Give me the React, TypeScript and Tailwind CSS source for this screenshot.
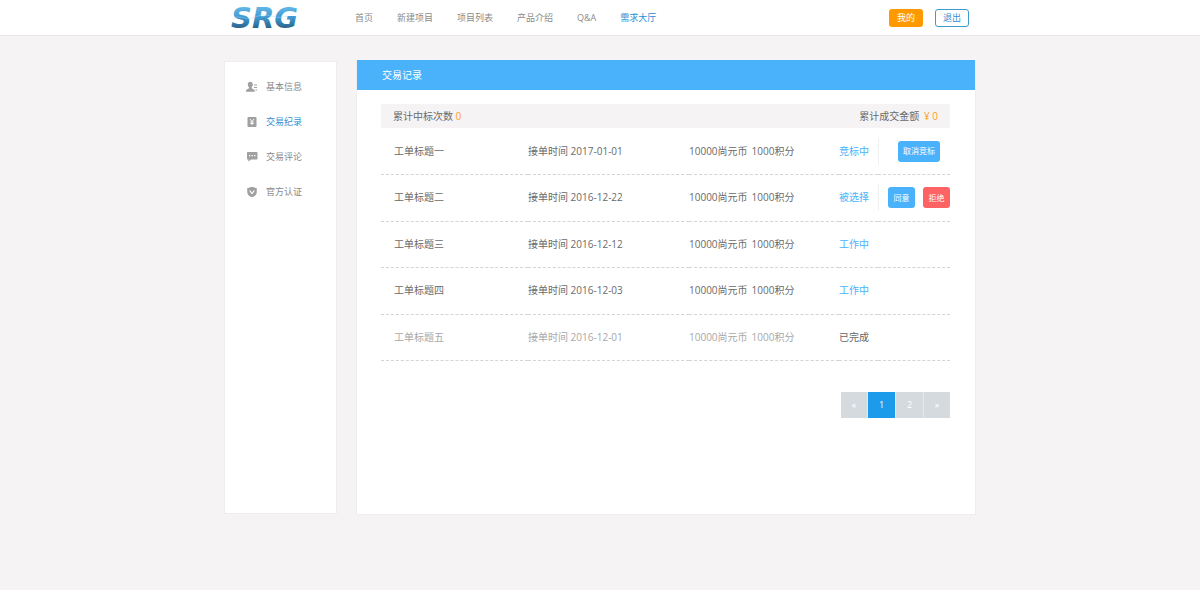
import type { ReactNode } from "react";

type Action = { label: string; danger?: boolean };

type Order = {
  title: string;
  date: string;
  status: string;
  done?: boolean;
  actions?: Action[];
};

const navItems = ["首页", "新建项目", "项目列表", "产品介绍", "Q&A", "需求大厅"];

const orders: Order[] = [
  { title: "工单标题一", date: "2017-01-01", status: "竞标中", actions: [{ label: "取消竞标" }] },
  {
    title: "工单标题二",
    date: "2016-12-22",
    status: "被选择",
    actions: [{ label: "同意" }, { label: "拒绝", danger: true }],
  },
  { title: "工单标题三", date: "2016-12-12", status: "工作中" },
  { title: "工单标题四", date: "2016-12-03", status: "工作中" },
  { title: "工单标题五", date: "2016-12-01", status: "已完成", done: true },
];

function Logo() {
  return (
    <svg className="h-[35px] w-[76px]" viewBox="0 0 76 35" role="img" aria-label="SRG">
      <defs>
        <linearGradient id="logo" x1="0" y1="0" x2="0" y2="1">
          <stop offset="0.2" stopColor="#5fb6e6" />
          <stop offset="0.5" stopColor="#3d97cf" />
          <stop offset="0.8" stopColor="#2b6288" />
        </linearGradient>
      </defs>
      <text
        x="1"
        y="28"
        fill="url(#logo)"
        className="font-['DejaVu_Sans'] text-[29px] font-bold italic"
      >
        SRG
      </text>
      {/* wave running through the letters */}
      <path
        d="M3 18.5c7-4 12 1.5 19-.5s9-4 16-2.5 12 3 19 .5"
        fill="none"
        stroke="#a9dcf5"
        strokeWidth="0.8"
        opacity="0.5"
      />
    </svg>
  );
}

function MenuIcon({ children }: { children: ReactNode }) {
  return (
    <svg className="h-[12px] w-[12px] shrink-0" viewBox="0 0 12 12" fill="#a0a0a0" aria-hidden="true">
      {children}
    </svg>
  );
}

const menuItems = [
  {
    label: "基本信息",
    icon: (
      <MenuIcon>
        <path d="M4.3.8c1.6 0 2.5 1.1 2.5 2.7 0 1.3-.5 2.3-1.2 2.9v.9l2.3 1.1c.6.3.8.8.8 1.4v1H0v-1c0-.6.3-1.1.8-1.4l2.2-1.1v-.9C2.3 5.8 1.8 4.8 1.8 3.5 1.8 1.9 2.7.8 4.3.8z" />
        <path d="M8 3.5h3v1H8zM8 6h3v1H8zM9.5 8.5H11v1H9.5z" />
      </MenuIcon>
    ),
  },
  {
    label: "交易纪录",
    icon: (
      <MenuIcon>
        <rect x="1.5" y="1" width="9" height="10" rx="1" />
        <path d="M4 3l2 2.6L8 3M6 5.6V9M4.3 6h3.4M4.3 7.5h3.4" fill="none" stroke="#fff" strokeWidth="0.9" />
      </MenuIcon>
    ),
  },
  {
    label: "交易评论",
    icon: (
      <MenuIcon>
        <path d="M2 1h8.5c.6 0 1 .4 1 1v5.500c0 .6-.4 1-1 1H5l-2.500 2.300V8.500H2c-.6 0-1-.4-1-1V2c0-.6.4-1 1-1z" />
        <path d="M3 4h1.300v1.300H3zM5.600 4h1.300v1.300H5.600zM8.200 4h1.300v1.300H8.200z" fill="#fff" />
      </MenuIcon>
    ),
  },
  {
    label: "官方认证",
    icon: (
      <MenuIcon>
        <path d="M6 .8l4.8 1.5v3.400c0 2.600-1.800 4.600-4.800 5.600-3-1-4.800-3-4.800-5.600V2.300z" />
        <path d="M3.7 4.5L6 7.5l2.400-3" fill="none" stroke="#fff" strokeWidth="1.2" />
      </MenuIcon>
    ),
  },
];

function Header() {
  return (
    <header className="border-b border-[#e8e8e8] bg-white">
      <div className="mx-auto flex h-[35px] max-w-[750px] items-center pr-[6px] pl-[5px]">
        <a href="#" className="mr-[49px]">
          <Logo />
        </a>
        <nav className="flex items-center gap-[24px] text-[9px]">
          {navItems.map((item) => (
            <a
              key={item}
              href="#"
              className={item === "需求大厅" ? "text-[#2f8fd3]" : "text-[#8a8a8a]"}
            >
              {item}
            </a>
          ))}
        </nav>
        <div className="ml-auto flex gap-[12px] text-[9px]">
          <button className="h-[18px] w-[34px] rounded-[3px] bg-[#ff9900] text-white">我的</button>
          <button className="h-[18px] w-[34px] rounded-[3px] border border-[#3f9ad0] text-[#2f8fd3]">
            退出
          </button>
        </div>
      </div>
    </header>
  );
}

function Sidebar() {
  return (
    <aside className="mt-px min-h-[453px] w-[113px] shrink-0 self-start border border-[#efeeef] bg-white pt-[7px]">
      <ul>
        {menuItems.map((item) => (
          <li key={item.label}>
            <a
              href="#"
              className={`flex h-[35px] items-center gap-[8px] pl-[21px] text-[9px] ${
                item.label === "交易纪录" ? "text-[#2f8fd3]" : "text-[#8a8a8a]"
              }`}
            >
              {item.icon}
              {item.label}
            </a>
          </li>
        ))}
      </ul>
    </aside>
  );
}

function OrderRow({ order }: { order: Order }) {
  return (
    <tr className={`h-[46px] border-b border-dashed border-[#d4d4d4] ${order.done ? "text-[#a8a8a8]" : ""}`}>
      <td className="pl-[13px]">{order.title}</td>
      <td>接单时间 {order.date}</td>
      <td>
        <span className="mr-[4px]">10000尚元币</span>
        <span>1000积分</span>
      </td>
      <td className={order.done ? "text-[#666]" : "text-[#4ab2fb]"}>{order.status}</td>
      <td>
        {order.actions && (
          <div className="flex h-[27px] items-center justify-center gap-[8px] border-l border-[#f0f0f0] pl-[9px]">
            {order.actions.map((action) => (
              <button
                key={action.label}
                className={`h-[21px] min-w-[27px] rounded-[3px] px-[5px] text-[8px] whitespace-nowrap text-white ${
                  action.danger ? "bg-[#fd6265]" : "bg-[#4ab2fb]"
                }`}
              >
                {action.label}
              </button>
            ))}
          </div>
        )}
      </td>
    </tr>
  );
}

function Pagination() {
  return (
    <nav className="mt-[31px] flex justify-end" aria-label="分页">
      <div className="flex h-[26px] gap-px bg-[#e4e8eb] text-[9px] text-white">
        <button className="w-[26px] bg-[#d5dadf]">«</button>
        <button className="w-[27px] bg-[#1b9be9]" aria-current="page">
          1
        </button>
        <button className="w-[27px] bg-[#d5dadf]">2</button>
        <button className="w-[26px] bg-[#d5dadf]">»</button>
      </div>
    </nav>
  );
}

function Records() {
  return (
    <main className="min-h-[455px] min-w-0 flex-1 border border-t-0 border-[#efeeef] bg-white">
      <h1 className="flex h-[30px] items-center bg-[#4ab2fb] pl-[25px] text-[10px] text-white">
        交易记录
      </h1>
      <div className="pt-[14px] pr-[25px] pl-[24px] text-[10px] text-[#6a6a6a]">
        <div className="flex h-[24px] items-center justify-between bg-[#f5f3f4] px-[12px]">
          <p>
            累计中标次数 <span className="text-[#ff9c1a]">0</span>
          </p>
          <p>
            累计成交金额 <span className="ml-[2px] text-[#ff9c1a]">¥ 0</span>
          </p>
        </div>
        <table className="h-[233px] w-full table-fixed border-collapse">
          <colgroup>
            <col />
            <col className="w-[161px]" />
            <col className="w-[150px]" />
            <col className="w-[39px]" />
            <col className="w-[72px]" />
          </colgroup>
          <tbody>
            {orders.map((order) => (
              <OrderRow key={order.title} order={order} />
            ))}
          </tbody>
        </table>
        <Pagination />
      </div>
    </main>
  );
}

export default function App() {
  return (
    <div className="min-h-screen bg-[#f5f3f4] font-['Open_Sans','Noto_Sans_CJK_SC',sans-serif]">
      <Header />
      <div className="mx-auto flex max-w-[752px] gap-[19px] pt-[24px]">
        <Sidebar />
        <Records />
      </div>
    </div>
  );
}
